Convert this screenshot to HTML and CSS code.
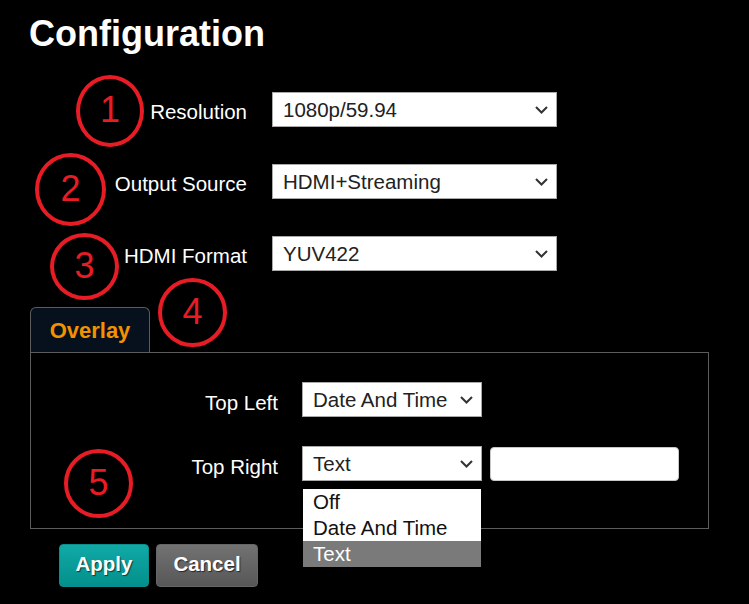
FILE: index.html
```html
<!DOCTYPE html>
<html lang="en">
<head>
<meta charset="utf-8">
<title>Configuration</title>
<link rel="stylesheet" href="styles.css">
</head>
<body>
<div class="page">
  <h1 class="title">Configuration</h1>

  <div class="form">
    <label class="label">Resolution</label>
    <div class="select"><span>1080p/59.94</span><svg class="chev" width="13" height="8" viewBox="0 0 13 8"><path d="M1 1l5.5 5.5L12 1" fill="none" stroke="#333" stroke-width="2"/></svg></div>

    <label class="label">Output Source</label>
    <div class="select"><span>HDMI+Streaming</span><svg class="chev" width="13" height="8" viewBox="0 0 13 8"><path d="M1 1l5.5 5.5L12 1" fill="none" stroke="#333" stroke-width="2"/></svg></div>

    <label class="label">HDMI Format</label>
    <div class="select"><span>YUV422</span><svg class="chev" width="13" height="8" viewBox="0 0 13 8"><path d="M1 1l5.5 5.5L12 1" fill="none" stroke="#333" stroke-width="2"/></svg></div>
  </div>

  <div class="tabs">
    <div class="tab">Overlay</div>
  </div>
  <div class="panel">
    <div class="panel-grid">
      <label class="label plabel">Top Left</label>
      <div class="select small"><span>Date And Time</span><svg class="chev" width="13" height="8" viewBox="0 0 13 8"><path d="M1 1l5.5 5.5L12 1" fill="none" stroke="#333" stroke-width="2"/></svg></div>
      <div></div>

      <label class="label plabel">Top Right</label>
      <div class="dd">
        <div class="select small"><span>Text</span><svg class="chev" width="13" height="8" viewBox="0 0 13 8"><path d="M1 1l5.5 5.5L12 1" fill="none" stroke="#333" stroke-width="2"/></svg></div>
        <ul class="options">
          <li>Off</li>
          <li>Date And Time</li>
          <li class="active">Text</li>
        </ul>
      </div>
      <input class="textbox" type="text">
    </div>
  </div>

  <div class="buttons">
    <button class="btn btn-apply">Apply</button>
    <button class="btn btn-cancel">Cancel</button>
  </div>

  <div class="mark mark-1">1</div>
  <div class="mark mark-2">2</div>
  <div class="mark mark-3">3</div>
  <div class="mark mark-4">4</div>
  <div class="mark mark-5">5</div>
</div>
</body>
</html>
```

FILE: styles.css
```css
* { box-sizing: border-box; }

html, body {
  margin: 0;
  padding: 0;
  background: #000;
}

body {
  font-family: "Liberation Sans", Arial, sans-serif;
  color: #fff;
}

.page {
  position: relative;
  width: 749px;
  height: 604px;
  overflow: hidden;
}

.title {
  margin: 14px 0 0 0;
  padding-left: 29px;
  font-size: 36px;
  line-height: 40px;
  font-weight: bold;
  color: #fff;
}

.form {
  display: grid;
  grid-template-columns: 247px 285px;
  column-gap: 25px;
  row-gap: 37px;
  margin-top: 38px;
  align-items: center;
}

.label {
  font-size: 20.5px;
  color: #fff;
  text-align: right;
  padding-top: 4px;
  white-space: nowrap;
}

.select {
  display: flex;
  align-items: center;
  justify-content: space-between;
  height: 35px;
  padding: 0 8px 0 10px;
  background: #fff;
  border: 1px solid #a9a9a9;
  color: #222;
  font-size: 20.5px;
  white-space: nowrap;
}

.select.small {
  width: 180px;
}

.chev {
  flex: none;
  margin-top: 1px;
}

.tabs {
  display: flex;
  margin: 36px 0 0 30px;
}

.tab {
  width: 120px;
  height: 45px;
  display: flex;
  align-items: center;
  justify-content: center;
  padding-top: 1px;
  background: #06111d;
  border: 1px solid #5c5c5c;
  border-bottom: none;
  border-radius: 6px 6px 0 0;
  color: #f39200;
  font-size: 22px;
  font-weight: bold;
}

.panel {
  margin-left: 30px;
  width: 679px;
  border: 1px solid #5c5c5c;
  padding: 29px 0 47px 0;
}

.panel-grid {
  display: grid;
  grid-template-columns: 263px 180px 189px;
  column-gap: 8px;
  row-gap: 29px;
  align-items: center;
}

.plabel {
  padding-right: 16px;
  padding-top: 6px;
}

.dd {
  position: relative;
}

.options {
  position: absolute;
  top: calc(100% + 8px);
  left: 1px;
  width: 178px;
  margin: 0;
  padding: 0;
  list-style: none;
  background: #fff;
  color: #111;
  font-size: 20.5px;
  z-index: 2;
}

.options li {
  height: 26px;
  line-height: 26px;
  padding-left: 10px;
}

.options li.active {
  background: #7a7a7a;
  color: #fff;
}

.textbox {
  width: 189px;
  height: 34px;
  border: 1px solid #c8c8c8;
  border-radius: 4px;
  background: #fff;
  margin-top: 1px;
}

.buttons {
  display: flex;
  gap: 7px;
  margin: 15px 0 0 59px;
}

.btn {
  height: 43px;
  padding: 0 15px 3px 15px;
  border-radius: 4px;
  font-family: "Liberation Sans", Arial, sans-serif;
  font-size: 20.5px;
  font-weight: bold;
  color: #fff;
  text-shadow: 1px 1px 1px rgba(0, 0, 0, 0.6);
}

.btn-apply {
  width: 90px;
  background: linear-gradient(#10a9a6, #03908c);
  border: 1px solid #0a8f8c;
}

.btn-cancel {
  width: 102px;
  background: linear-gradient(#727272, #575757);
  border: 1px solid #666;
}

.mark {
  position: absolute;
  display: flex;
  align-items: center;
  justify-content: center;
  border: 4px solid #e81c24;
  border-radius: 50%;
  color: #e81c24;
  font-size: 36px;
  line-height: 1;
  padding-bottom: 2px;
}

.mark-1 { left: 76px;  top: 75px;  width: 68px; height: 72px; }
.mark-2 { left: 35px;  top: 153px; width: 71px; height: 73px; }
.mark-3 { left: 50px;  top: 233px; width: 69px; height: 67px; }
.mark-4 { left: 158px; top: 278px; width: 69px; height: 69px; }
.mark-5 { left: 64px;  top: 449px; width: 69px; height: 69px; }
```
